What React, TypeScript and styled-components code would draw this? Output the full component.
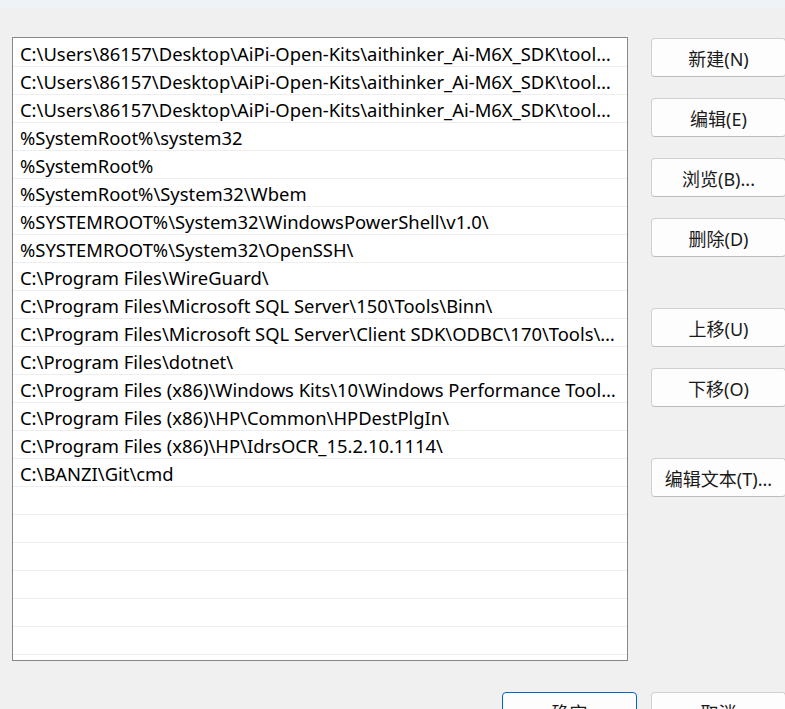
import React from 'react';
import styled, { createGlobalStyle } from 'styled-components';

const GlobalStyle = createGlobalStyle`
  html, body {
    margin: 0;
    padding: 0;
    background: #f0f0f0;
    overflow: hidden;
  }
  body {
    font-family: "Noto Sans", "Noto Sans CJK SC", sans-serif;
    color: #000;
  }
`;

const Window = styled.div`
  width: 785px;
  height: 709px;
  background: #f0f0f0;
  overflow: hidden;
`;

const TopStrip = styled.div`
  height: 7px;
  background: #eef3f8;
`;

const Body = styled.div`
  display: flex;
  align-items: flex-start;
  gap: 23px;
  padding: 30px 0 0 12px;
`;

const ListBox = styled.div`
  width: 616px;
  height: 624px;
  box-sizing: border-box;
  border: 1px solid #878787;
  background: #fff;
  padding-top: 1px;
  overflow: hidden;
  flex-shrink: 0;
`;

const Row = styled.div`
  height: 28px;
  box-sizing: border-box;
  border-bottom: 1px solid #eeeeee;
  padding: 1px 9px 0 7px;
  font-size: 18.4px;
  line-height: 27px;
  white-space: nowrap;
  overflow: hidden;
  text-overflow: ellipsis;
`;

const ButtonColumn = styled.div`
  display: flex;
  flex-direction: column;
  padding-top: 1px;
  flex-shrink: 0;
`;

const Button = styled.button<{ $space?: number; $primary?: boolean }>`
  width: 135px;
  height: 39px;
  box-sizing: border-box;
  margin-top: ${p => p.$space ?? 0}px;
  background: #fdfdfd;
  border: 1px solid ${p => (p.$primary ? '#0067c0' : '#d0d0d0')};
  border-bottom-color: ${p => (p.$primary ? '#0067c0' : '#bdbdbd')};
  border-radius: 4px;
  font-family: "Noto Sans", "Noto Sans CJK SC", sans-serif;
  font-size: 18px;
  line-height: 38px;
  color: #1a1a1a;
  padding: 1px 0 0;
  white-space: nowrap;
  flex-shrink: 0;
`;

const Footer = styled.div`
  display: flex;
  gap: 14px;
  padding: 31px 0 0 502px;
`;

const paths = [
  'C:\\Users\\86157\\Desktop\\AiPi-Open-Kits\\aithinker_Ai-M6X_SDK\\toolchain\\cmake\\bin',
  'C:\\Users\\86157\\Desktop\\AiPi-Open-Kits\\aithinker_Ai-M6X_SDK\\toolchain\\mingw64\\bin',
  'C:\\Users\\86157\\Desktop\\AiPi-Open-Kits\\aithinker_Ai-M6X_SDK\\toolchain\\toolchain_gcc_t-head_windows\\bin',
  '%SystemRoot%\\system32',
  '%SystemRoot%',
  '%SystemRoot%\\System32\\Wbem',
  '%SYSTEMROOT%\\System32\\WindowsPowerShell\\v1.0\\',
  '%SYSTEMROOT%\\System32\\OpenSSH\\',
  'C:\\Program Files\\WireGuard\\',
  'C:\\Program Files\\Microsoft SQL Server\\150\\Tools\\Binn\\',
  'C:\\Program Files\\Microsoft SQL Server\\Client SDK\\ODBC\\170\\Tools\\Binn\\',
  'C:\\Program Files\\dotnet\\',
  'C:\\Program Files (x86)\\Windows Kits\\10\\Windows Performance Toolkit\\',
  'C:\\Program Files (x86)\\HP\\Common\\HPDestPlgIn\\',
  'C:\\Program Files (x86)\\HP\\IdrsOCR_15.2.10.1114\\',
  'C:\\BANZI\\Git\\cmd',
];

const rows = [...paths, ...Array(7).fill('')];

const sideButtons: { label: string; space: number }[] = [
  { label: '新建(N)', space: 0 },
  { label: '编辑(E)', space: 21 },
  { label: '浏览(B)...', space: 21 },
  { label: '删除(D)', space: 21 },
  { label: '上移(U)', space: 51 },
  { label: '下移(O)', space: 21 },
  { label: '编辑文本(T)...', space: 51 },
];

export default function App() {
  return (
    <Window>
      <GlobalStyle />
      <TopStrip />
      <Body>
        <ListBox>
          {rows.map((p, i) => (
            <Row key={i}>{p}</Row>
          ))}
        </ListBox>
        <ButtonColumn>
          {sideButtons.map(b => (
            <Button key={b.label} $space={b.space}>
              {b.label}
            </Button>
          ))}
        </ButtonColumn>
      </Body>
      <Footer>
        <Button $primary>确定</Button>
        <Button>取消</Button>
      </Footer>
    </Window>
  );
}
